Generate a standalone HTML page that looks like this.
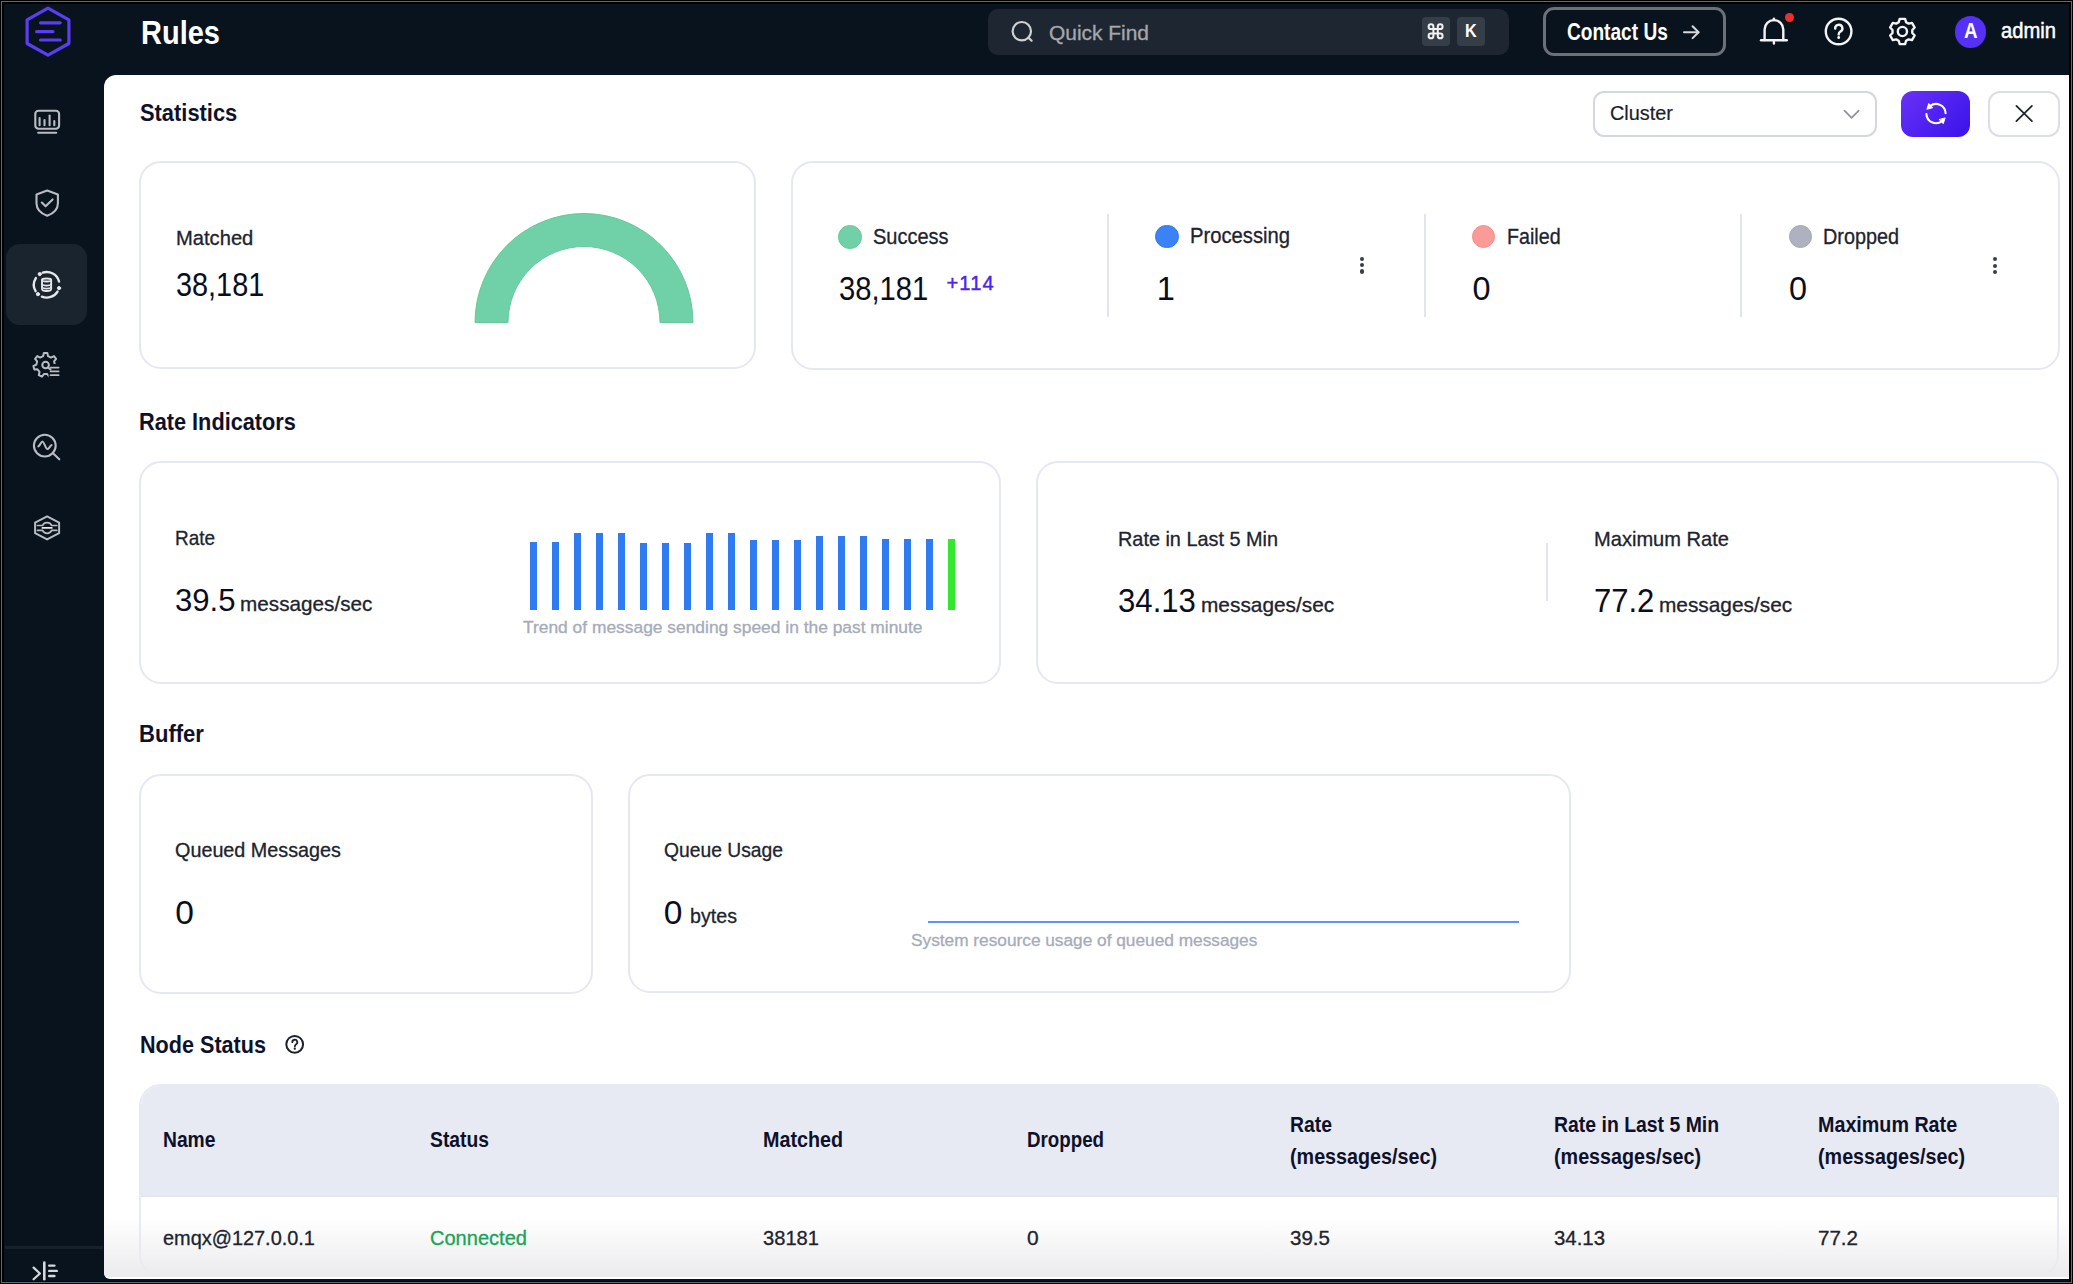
<!DOCTYPE html>
<html><head><meta charset="utf-8"><style>
*{margin:0;padding:0;box-sizing:border-box}
html,body{width:2073px;height:1284px;overflow:hidden;background:#000;font-family:"Liberation Sans",sans-serif}
.bg{position:absolute;left:4px;top:4px;width:2065px;height:1276.5px;background:#09131d}
.t{position:absolute;white-space:nowrap;line-height:1;transform-origin:0 0}
.abs{position:absolute}
.frame{position:absolute;left:1px;top:1px;width:2071px;height:1282px;border:1.3px solid #55707a;pointer-events:none}
.main{position:absolute;left:104px;top:75px;width:1964.5px;height:1204.2px;background:#fff;border-radius:12px 0 0 6px;overflow:hidden}
.fade{position:absolute;left:0;right:0;bottom:2.5px;height:60px;background:linear-gradient(to bottom,rgba(236,236,238,0),rgba(235,235,237,1))}
.card{position:absolute;border:2px solid #e6e8f1;border-radius:22px;background:#fff}
.bar{position:absolute;width:7.4px}
.div{position:absolute;width:2px;background:#e3e5ee}
.dot{position:absolute;border-radius:50%}
</style></head><body>
<div class="bg"></div>
<div class="main">
</div>
<div class="card" style="left:139px;top:161px;width:617px;height:208px"></div>
<div class="card" style="left:791px;top:161px;width:1269px;height:209px"></div>
<div class="card" style="left:139px;top:461px;width:862px;height:223px"></div>
<div class="card" style="left:1036px;top:461px;width:1023px;height:223px"></div>
<div class="card" style="left:139px;top:774px;width:454px;height:220px"></div>
<div class="card" style="left:628px;top:774px;width:943px;height:219px"></div>
<div class="abs" style="left:139px;top:1084px;width:1920px;height:193px;border:2px solid #e8eaf2;border-radius:22px;overflow:hidden;background:#fff">
  <div class="abs" style="left:0;top:0;width:100%;height:110.5px;background:#e8eaf3;border-bottom:1px solid #e1e3ec"></div>
</div>
<!-- sidebar selected -->
<div class="abs" style="left:6px;top:243.5px;width:81px;height:81.5px;background:#1a242e;border-radius:14px"></div>
<div class="abs" style="left:5px;top:1246.3px;width:98px;height:2.4px;background:#18212a"></div>
<!-- logo -->
<svg class="abs" style="left:0;top:0" width="104" height="75" viewBox="0 0 104 75">
  <polygon points="48,8.2 68.9,19.9 68.9,43.5 48,55.2 27.1,43.5 27.1,19.9" fill="none" stroke="#5a3df5" stroke-width="3.2" stroke-linejoin="round"/>
  <g stroke="#5a3df5" stroke-width="3.2" stroke-linecap="round">
    <line x1="40.5" y1="22.8" x2="60.2" y2="22.8"/>
    <line x1="36.6" y1="31.7" x2="52.9" y2="31.7"/>
    <line x1="40.5" y1="40" x2="60.2" y2="40"/>
  </g>
</svg>
<!-- sidebar icons -->
<svg class="abs" style="left:0;top:90px" width="104" height="470" viewBox="0 90 104 470" fill="none" stroke="#b9bcc2" stroke-width="2.1" stroke-linecap="round" stroke-linejoin="round">
  <rect x="35.3" y="110.7" width="23.8" height="18" rx="3.2"/>
  <line x1="38.2" y1="132.8" x2="56.2" y2="132.8"/>
  <line x1="39.6" y1="118" x2="39.6" y2="125.3"/>
  <line x1="44.5" y1="120" x2="44.5" y2="125.3"/>
  <line x1="49.6" y1="115.5" x2="49.6" y2="125.3"/>
  <line x1="54.3" y1="121" x2="54.3" y2="125.3"/>
  <path d="M47.2 190.6 L57.9 194.6 V203.2 C57.9 209.3 53 213.6 47.2 215.8 C41.4 213.6 36.5 209.3 36.5 203.2 V194.6 Z"/>
  <polyline points="41.8,202.6 45.6,206.3 52.6,199.4"/>
  <!-- db sync -->
  <g stroke="#e6e7ea" stroke-width="2.4">
  <path d="M42.74 272.63 A12.8 12.8 0 0 1 59.06 281.49"/>
  <path d="M57.56 291.58 A12.8 12.8 0 0 1 41.91 296.67"/>
  <path d="M35.61 291.20 A12.8 12.8 0 0 1 35.84 278.02"/>
  <circle cx="39.73" cy="274.07" r="1.6" fill="#e6e7ea" stroke-width="1"/>
  <circle cx="59.06" cy="288.11" r="1.6" fill="#e6e7ea" stroke-width="1"/>
  <circle cx="37.97" cy="294.16" r="1.6" fill="#e6e7ea" stroke-width="1"/>
  <ellipse cx="46.6" cy="280" rx="4.6" ry="1.5" stroke-width="1.8"/>
  <path d="M42 280 V289 C42 290.2 44 291 46.6 291 C49.2 291 51.2 290.2 51.2 289 V280" stroke-width="1.8"/>
  <path d="M42 283.6 C42 284.8 44 285.6 46.6 285.6 C49.2 285.6 51.2 284.8 51.2 283.6" stroke-width="1.6"/>
  <path d="M42 286.6 C42 287.8 44 288.6 46.6 288.6 C49.2 288.6 51.2 287.8 51.2 286.6" stroke-width="1.6"/>
  </g>
  <!-- gear list -->
  <path d="M43.15 356.13 L43.85 352.93 L47.35 352.93 L48.05 356.13 L51.01 357.56 L53.95 356.11 L56.13 358.84 L54.06 361.38 L54.79 364.59 L57.76 365.98 L56.98 369.39 L53.70 369.36 L51.65 371.93 L52.41 375.12 L49.27 376.64 L47.24 374.05 L43.96 374.05 L41.93 376.64 L38.79 375.12 L39.55 371.93 L37.50 369.36 L34.22 369.39 L33.44 365.98 L36.41 364.59 L37.14 361.38 L35.07 358.84 L37.25 356.11 L40.19 357.56 Z" stroke-width="2"/>
  <rect x="48.5" y="364" width="12" height="16" fill="#0a121c" stroke="none"/>
  <circle cx="45.6" cy="365" r="3.3" stroke-width="2"/>
  <line x1="48" y1="367.4" x2="50.5" y2="369.6" stroke-width="2"/>
  <line x1="50.6" y1="367.6" x2="58.6" y2="367.6" stroke-width="1.8"/>
  <line x1="50.6" y1="371.4" x2="58.6" y2="371.4" stroke-width="1.8"/>
  <line x1="50.6" y1="375.2" x2="58.6" y2="375.2" stroke-width="1.8"/>
  <!-- magnifier pulse -->
  <circle cx="44.8" cy="445.6" r="10.9"/>
  <line x1="52.7" y1="453.1" x2="59.3" y2="459.3"/>
  <path d="M38.3 446.4 C40 445.6 41.2 441.2 42.7 441.6 C44.2 442 45.8 449.4 47.6 449.1 C49 448.8 50 446 51.5 445.1" stroke-width="2"/>
  <!-- layers -->
  <path d="M47.1 516.4 L59.1 522.6 V533.2 L47.1 539.4 L35.1 533.2 V522.6 Z" stroke-width="2"/>
  <path d="M37.4 525.5 H42.6 C44.2 521.6 50 521.6 51.6 525.5 H56.8" stroke-width="1.7"/>
  <path d="M42.4 527.9 H51.8" stroke="#e8e9ec" stroke-width="1.8"/>
  <path d="M37.4 530.4 H42.6 C44.2 534.3 50 534.3 51.6 530.4 H56.8" stroke-width="1.7"/>
</svg>
<!-- collapse icon -->
<svg class="abs" style="left:20px;top:1255px" width="50" height="29" viewBox="20 1255 50 29" fill="none" stroke="#d6d8dc" stroke-width="2.2" stroke-linecap="round" stroke-linejoin="round">
  <polyline points="33.6,1267.6 39.9,1273.5 33.6,1279.3"/>
  <line x1="44.3" y1="1262.6" x2="44.3" y2="1279.3" stroke-width="2.6"/>
  <line x1="49.2" y1="1265.6" x2="54.4" y2="1265.6" stroke-width="2.4"/>
  <line x1="49.2" y1="1270.9" x2="56.8" y2="1270.9" stroke-width="2.4"/>
  <line x1="49.2" y1="1276" x2="54.4" y2="1276" stroke-width="2.4"/>
</svg>
<!-- search box -->
<div class="abs" style="left:987.5px;top:8.7px;width:521px;height:46.5px;background:#1e2731;border-radius:10px"></div>
<div class="abs" style="left:1421.5px;top:17.4px;width:28.2px;height:28.6px;background:#353e47;border-radius:4px"></div>
<div class="abs" style="left:1456.7px;top:17.4px;width:28px;height:28.6px;background:#353e47;border-radius:4px"></div>
<svg class="abs" style="left:1000px;top:10px" width="40" height="40" viewBox="1000 10 40 40" fill="none" stroke="#cfd1d4" stroke-width="2.2" stroke-linecap="round">
  <circle cx="1021.8" cy="31.2" r="9.2"/>
  <line x1="1028.4" y1="37.6" x2="1031.6" y2="40.7"/>
</svg>
<svg class="abs" style="left:1425px;top:21px" width="22" height="20" viewBox="1425 21 22 20" fill="none" stroke="#f2f2f3" stroke-width="1.9">
  <path d="M1433.4 29.1 H1437.8 V33.5 H1433.4 Z M1433.4 29.1 V26.7 A2.4 2.4 0 1 0 1431 29.1 H1433.4 M1437.8 29.1 V26.7 A2.4 2.4 0 1 1 1440.2 29.1 H1437.8 M1433.4 33.5 V35.9 A2.4 2.4 0 1 1 1431 33.5 H1433.4 M1437.8 33.5 V35.9 A2.4 2.4 0 1 0 1440.2 33.5 H1437.8" stroke-width="2"/>
</svg>
<!-- contact us -->
<div class="abs" style="left:1542.7px;top:7.3px;width:183.3px;height:48.6px;border:3px solid #6b7079;border-radius:11px"></div>
<svg class="abs" style="left:1680px;top:22px" width="24" height="20" viewBox="1680 22 24 20" fill="none" stroke="#d8d9dc" stroke-width="2" stroke-linecap="round" stroke-linejoin="round">
  <line x1="1684" y1="32.2" x2="1698.4" y2="32.2"/>
  <polyline points="1692.6,26.3 1698.6,32.2 1692.6,38.1"/>
</svg>
<!-- bell / help / gear -->
<svg class="abs" style="left:1750px;top:5px" width="170" height="50" viewBox="1750 5 170 50" fill="none" stroke="#f4f4f5" stroke-width="2.4" stroke-linecap="round" stroke-linejoin="round">
  <path d="M1764.6 40 V29.5 A9.3 9.3 0 0 1 1783.3 29.5 V40"/>
  <line x1="1761" y1="40.3" x2="1786.8" y2="40.3"/>
  <line x1="1773.9" y1="18.6" x2="1773.9" y2="20"/>
  <line x1="1773.9" y1="42" x2="1773.9" y2="43.6"/>
  <circle cx="1838.6" cy="31.5" r="12.8"/>
  <path d="M1835.2 28.6 A3.6 3.6 0 1 1 1840.4 31.6 C1839.2 32.4 1838.7 33 1838.7 34.4" stroke-width="2.4"/>
  <line x1="1838.7" y1="37.4" x2="1838.7" y2="37.7" stroke-width="2.8"/>
  <circle cx="1902.4" cy="31.5" r="4.6"/>
  <path d="M1898.72 22.20 L1899.72 18.88 L1905.08 18.88 L1906.08 22.20 L1908.61 23.66 L1911.99 22.87 L1914.67 27.51 L1912.29 30.04 L1912.29 32.96 L1914.67 35.49 L1911.99 40.13 L1908.61 39.34 L1906.08 40.80 L1905.08 44.12 L1899.72 44.12 L1898.72 40.80 L1896.19 39.34 L1892.81 40.13 L1890.13 35.49 L1892.51 32.96 L1892.51 30.04 L1890.13 27.51 L1892.81 22.87 L1896.19 23.66 Z"/>
</svg>
<div class="dot" style="left:1784.7px;top:12.8px;width:9.6px;height:9.6px;background:#e8312e"></div>
<div class="dot" style="left:1954.6px;top:16.2px;width:31.4px;height:31.4px;background:#5531f6"></div>

<!-- select + buttons -->
<div class="abs" style="left:1593px;top:90.8px;width:284.3px;height:46.3px;border:2px solid #d5d7df;border-radius:11px;background:#fff"></div>
<svg class="abs" style="left:1840px;top:104px" width="24" height="20" viewBox="1840 104 24 20" fill="none" stroke="#8e9199" stroke-width="1.7" stroke-linecap="round" stroke-linejoin="round">
  <polyline points="1844.5,110.6 1851.6,117.8 1858.7,110.6"/>
</svg>
<div class="abs" style="left:1901px;top:90.7px;width:69.3px;height:46.4px;border-radius:12px;background:linear-gradient(135deg,#6c30f6 0%,#4a1ff0 60%,#3b12e8 100%)"></div>
<svg class="abs" style="left:1920px;top:98px" width="32" height="32" viewBox="1920 98 32 32" fill="none" stroke="#ffffff" stroke-width="2.1" stroke-linecap="round" stroke-linejoin="round">
  <path d="M1930.09 106.04 A9.6 9.6 0 0 1 1945.59 113.26"/>
  <path d="M1941.91 121.16 A9.6 9.6 0 0 1 1926.41 113.94"/>
  <path d="M1927.00 108.95 L1928.75 103.50 L1932.50 107.39 Z" fill="#fff" stroke="#fff" stroke-width="1"/>
  <path d="M1945.00 118.25 L1943.25 123.70 L1939.50 119.81 Z" fill="#fff" stroke="#fff" stroke-width="1"/>
</svg>
<div class="abs" style="left:1987.5px;top:90.7px;width:72px;height:46.8px;border:2px solid #dcdee5;border-radius:12px;background:#fff"></div>
<svg class="abs" style="left:2010px;top:100px" width="28" height="28" viewBox="2010 100 28 28" fill="none" stroke="#22252c" stroke-width="1.8" stroke-linecap="round">
  <line x1="2016.4" y1="105.9" x2="2031.9" y2="121.1"/>
  <line x1="2031.9" y1="105.9" x2="2016.4" y2="121.1"/>
</svg>
<!-- kebabs -->
<div class="dot" style="left:1360px;top:256.7px;width:4.2px;height:4.2px;background:#3a3d48"></div>
<div class="dot" style="left:1360px;top:263.1px;width:4.2px;height:4.2px;background:#3a3d48"></div>
<div class="dot" style="left:1360px;top:269.4px;width:4.2px;height:4.2px;background:#3a3d48"></div>
<div class="dot" style="left:1993.3px;top:257.2px;width:4.2px;height:4.2px;background:#3a3d48"></div>
<div class="dot" style="left:1993.3px;top:263.6px;width:4.2px;height:4.2px;background:#3a3d48"></div>
<div class="dot" style="left:1993.3px;top:269.9px;width:4.2px;height:4.2px;background:#3a3d48"></div>
<!-- node status help -->
<svg class="abs" style="left:282px;top:1032px" width="26" height="26" viewBox="282 1032 26 26" fill="none" stroke="#1d2030" stroke-width="2" stroke-linecap="round">
  <circle cx="294.7" cy="1044.3" r="8.4"/>
  <path d="M292.3 1042.2 A2.5 2.5 0 1 1 296 1044.4 C295.2 1045 294.8 1045.4 294.8 1046.4" stroke-width="1.8"/>
  <line x1="294.8" y1="1048.6" x2="294.8" y2="1048.8" stroke-width="2.2"/>
</svg>

<div class="main" style="background:transparent;pointer-events:none"><div class="fade"></div></div>
<!-- gauge -->
<svg class="abs" style="left:460px;top:200px" width="250" height="130" viewBox="460 200 250 130">
  <path d="M475 322.5 A109 109 0 0 1 693 322.5 L660 322.5 A76 76 0 0 0 508 322.5 Z" fill="#70d0a7" stroke="#66c99c" stroke-width="1"/>
</svg>
<div class="div" style="left:1107px;top:214px;height:103px"></div>
<div class="div" style="left:1424px;top:214px;height:103px"></div>
<div class="div" style="left:1740px;top:214px;height:103px"></div>
<div class="div" style="left:1546px;top:543px;height:58px"></div>
<div class="dot" style="left:838.2px;top:225px;width:23.5px;height:23.5px;background:#72d0a8;border:1px solid #66c99c"></div>
<div class="dot" style="left:1155px;top:224.5px;width:23.8px;height:23.8px;background:#3b82f6;border:1px solid #2f77ef"></div>
<div class="dot" style="left:1471.5px;top:224.5px;width:23.8px;height:23.8px;background:#fb9a96;border:1px solid #f4908b"></div>
<div class="dot" style="left:1788.5px;top:224.5px;width:23.8px;height:23.8px;background:#adb1c0;border:1px solid #a3a7b6"></div>
<div class="bar" style="left:530px;top:542px;height:67.6px;background:#2f7cf2"></div>
<div class="bar" style="left:552px;top:542px;height:67.6px;background:#2f7cf2"></div>
<div class="bar" style="left:574px;top:533px;height:76.6px;background:#2f7cf2"></div>
<div class="bar" style="left:596px;top:533px;height:76.6px;background:#2f7cf2"></div>
<div class="bar" style="left:618px;top:533px;height:76.6px;background:#2f7cf2"></div>
<div class="bar" style="left:640px;top:543px;height:66.6px;background:#2f7cf2"></div>
<div class="bar" style="left:662px;top:543px;height:66.6px;background:#2f7cf2"></div>
<div class="bar" style="left:684px;top:543px;height:66.6px;background:#2f7cf2"></div>
<div class="bar" style="left:706px;top:533px;height:76.6px;background:#2f7cf2"></div>
<div class="bar" style="left:728px;top:533px;height:76.6px;background:#2f7cf2"></div>
<div class="bar" style="left:750px;top:540px;height:69.6px;background:#2f7cf2"></div>
<div class="bar" style="left:772px;top:540px;height:69.6px;background:#2f7cf2"></div>
<div class="bar" style="left:794px;top:540px;height:69.6px;background:#2f7cf2"></div>
<div class="bar" style="left:816px;top:535.5px;height:74.1px;background:#2f7cf2"></div>
<div class="bar" style="left:838px;top:535.5px;height:74.1px;background:#2f7cf2"></div>
<div class="bar" style="left:860px;top:535.5px;height:74.1px;background:#2f7cf2"></div>
<div class="bar" style="left:882px;top:539px;height:70.6px;background:#2f7cf2"></div>
<div class="bar" style="left:904px;top:539px;height:70.6px;background:#2f7cf2"></div>
<div class="bar" style="left:926px;top:539px;height:70.6px;background:#2f7cf2"></div>
<div class="bar" style="left:948px;top:539px;height:70.6px;background:#33e62e"></div>
<div class="abs" style="left:927.6px;top:920.6px;width:591.4px;height:2px;background:#5a96f5"></div>
<div class="t" style="left:141.00px;top:17.00px;font-size:32.68px;font-weight:bold;color:#ffffff;letter-spacing:0px;transform:scaleX(0.8871);">Rules</div>
<div class="t" style="left:1049.00px;top:23.00px;font-size:20.25px;font-weight:normal;color:#a4a7ae;letter-spacing:0px;transform:scaleX(1.0331);-webkit-text-stroke:0.3px #a4a7ae;">Quick Find</div>
<div class="t" style="left:1566.60px;top:21.00px;font-size:23.46px;font-weight:bold;color:#ffffff;letter-spacing:0px;transform:scaleX(0.8142);">Contact Us</div>
<div class="t" style="left:2000.90px;top:21.00px;font-size:21.51px;font-weight:normal;color:#ffffff;letter-spacing:0px;transform:scaleX(0.9377);-webkit-text-stroke:0.5px #ffffff;">admin</div>
<div class="t" style="left:1963.50px;top:20.00px;font-size:21.93px;font-weight:bold;color:#ffffff;letter-spacing:0px;transform:scaleX(0.8580);">A</div>
<div class="t" style="left:1464.70px;top:22.00px;font-size:18.72px;font-weight:bold;color:#ffffff;letter-spacing:0px;transform:scaleX(0.8667);">K</div>
<div class="t" style="left:139.80px;top:101.00px;font-size:24.08px;font-weight:bold;color:#0e1129;letter-spacing:0px;transform:scaleX(0.9081);">Statistics</div>
<div class="t" style="left:1610.30px;top:103.00px;font-size:20.25px;font-weight:normal;color:#1c1e2a;letter-spacing:0px;transform:scaleX(0.9821);-webkit-text-stroke:0.2px #1c1e2a;">Cluster</div>
<div class="t" style="left:176.00px;top:229.00px;font-size:19.83px;font-weight:normal;color:#20232d;letter-spacing:0px;transform:scaleX(1.0164);-webkit-text-stroke:0.3px #20232d;">Matched</div>
<div class="t" style="left:176.30px;top:269.00px;font-size:32.40px;font-weight:normal;color:#0b0d1c;letter-spacing:0px;transform:scaleX(0.8910);">38,181</div>
<div class="t" style="left:873.40px;top:227.00px;font-size:21.51px;font-weight:normal;color:#20232d;letter-spacing:0px;transform:scaleX(0.9305);-webkit-text-stroke:0.3px #20232d;">Success</div>
<div class="t" style="left:839.10px;top:272.00px;font-size:33.38px;font-weight:normal;color:#0b0d1c;letter-spacing:0px;transform:scaleX(0.8752);">38,181</div>
<div class="t" style="left:946.40px;top:273.00px;font-size:20.11px;font-weight:normal;color:#4b25ef;letter-spacing:1.15px;-webkit-text-stroke:0.45px #4b25ef;">+114</div>
<div class="t" style="left:1190.40px;top:226.00px;font-size:21.51px;font-weight:normal;color:#20232d;letter-spacing:0px;transform:scaleX(0.9412);-webkit-text-stroke:0.3px #20232d;">Processing</div>
<div class="t" style="left:1156.80px;top:273.00px;font-size:32.54px;font-weight:normal;color:#0b0d1c;letter-spacing:0px;">1</div>
<div class="t" style="left:1506.80px;top:227.00px;font-size:21.51px;font-weight:normal;color:#20232d;letter-spacing:0px;transform:scaleX(0.9155);-webkit-text-stroke:0.3px #20232d;">Failed</div>
<div class="t" style="left:1472.50px;top:273.00px;font-size:32.40px;font-weight:normal;color:#0b0d1c;letter-spacing:0px;">0</div>
<div class="t" style="left:1823.30px;top:227.00px;font-size:21.51px;font-weight:normal;color:#20232d;letter-spacing:0px;transform:scaleX(0.9218);-webkit-text-stroke:0.3px #20232d;">Dropped</div>
<div class="t" style="left:1789.00px;top:273.00px;font-size:32.40px;font-weight:normal;color:#0b0d1c;letter-spacing:0px;">0</div>
<div class="t" style="left:139.30px;top:410.00px;font-size:23.88px;font-weight:bold;color:#0e1129;letter-spacing:0px;transform:scaleX(0.9094);">Rate Indicators</div>
<div class="t" style="left:175.40px;top:528.00px;font-size:20.25px;font-weight:normal;color:#20232d;letter-spacing:0px;transform:scaleX(0.9357);-webkit-text-stroke:0.3px #20232d;">Rate</div>
<div class="t" style="left:175.40px;top:585.00px;font-size:31.42px;font-weight:normal;color:#0b0d1c;letter-spacing:0px;transform:scaleX(0.9902);">39.5</div>
<div class="t" style="left:240.40px;top:594.00px;font-size:20.25px;font-weight:normal;color:#20232d;letter-spacing:0px;transform:scaleX(1.0228);-webkit-text-stroke:0.3px #20232d;">messages/sec</div>
<div class="t" style="left:523.00px;top:620.00px;font-size:16.76px;font-weight:normal;color:#a5abb9;letter-spacing:0px;transform:scaleX(1.0381);-webkit-text-stroke:0.3px #a5abb9;">Trend of message sending speed in the past minute</div>
<div class="t" style="left:1118.00px;top:529.00px;font-size:20.25px;font-weight:normal;color:#20232d;letter-spacing:0px;transform:scaleX(0.9804);-webkit-text-stroke:0.3px #20232d;">Rate in Last 5 Min</div>
<div class="t" style="left:1118.40px;top:584.00px;font-size:33.38px;font-weight:normal;color:#0b0d1c;letter-spacing:0px;transform:scaleX(0.9330);">34.13</div>
<div class="t" style="left:1201.00px;top:595.00px;font-size:20.25px;font-weight:normal;color:#20232d;letter-spacing:0px;transform:scaleX(1.0297);-webkit-text-stroke:0.3px #20232d;">messages/sec</div>
<div class="t" style="left:1594.40px;top:529.00px;font-size:20.25px;font-weight:normal;color:#20232d;letter-spacing:0px;transform:scaleX(0.9916);-webkit-text-stroke:0.3px #20232d;">Maximum Rate</div>
<div class="t" style="left:1594.40px;top:584.00px;font-size:33.38px;font-weight:normal;color:#0b0d1c;letter-spacing:0px;transform:scaleX(0.9292);">77.2</div>
<div class="t" style="left:1658.80px;top:595.00px;font-size:20.25px;font-weight:normal;color:#20232d;letter-spacing:0px;transform:scaleX(1.0290);-webkit-text-stroke:0.3px #20232d;">messages/sec</div>
<div class="t" style="left:139.20px;top:722.00px;font-size:23.88px;font-weight:bold;color:#0e1129;letter-spacing:0px;transform:scaleX(0.9240);">Buffer</div>
<div class="t" style="left:175.30px;top:840.00px;font-size:20.25px;font-weight:normal;color:#20232d;letter-spacing:0px;transform:scaleX(0.9765);-webkit-text-stroke:0.3px #20232d;">Queued Messages</div>
<div class="t" style="left:175.30px;top:896.00px;font-size:33.52px;font-weight:normal;color:#0b0d1c;letter-spacing:0px;">0</div>
<div class="t" style="left:663.80px;top:840.00px;font-size:20.25px;font-weight:normal;color:#20232d;letter-spacing:0px;transform:scaleX(0.9524);-webkit-text-stroke:0.3px #20232d;">Queue Usage</div>
<div class="t" style="left:663.80px;top:896.00px;font-size:33.52px;font-weight:normal;color:#0b0d1c;letter-spacing:0px;">0</div>
<div class="t" style="left:690.20px;top:906.00px;font-size:20.25px;font-weight:normal;color:#20232d;letter-spacing:0px;transform:scaleX(0.9711);-webkit-text-stroke:0.3px #20232d;">bytes</div>
<div class="t" style="left:911.30px;top:933.00px;font-size:16.76px;font-weight:normal;color:#a5abb9;letter-spacing:0px;transform:scaleX(1.0303);-webkit-text-stroke:0.3px #a5abb9;">System resource usage of queued messages</div>
<div class="t" style="left:140.30px;top:1033.00px;font-size:24.30px;font-weight:bold;color:#0e1129;letter-spacing:0px;transform:scaleX(0.8889);">Node Status</div>
<div class="t" style="left:162.80px;top:1129.00px;font-size:22.07px;font-weight:bold;color:#0e1129;letter-spacing:0px;transform:scaleX(0.8726);">Name</div>
<div class="t" style="left:429.50px;top:1129.00px;font-size:22.07px;font-weight:bold;color:#0e1129;letter-spacing:0px;transform:scaleX(0.8754);">Status</div>
<div class="t" style="left:763.10px;top:1129.00px;font-size:22.07px;font-weight:bold;color:#0e1129;letter-spacing:0px;transform:scaleX(0.8944);">Matched</div>
<div class="t" style="left:1027.00px;top:1129.00px;font-size:22.07px;font-weight:bold;color:#0e1129;letter-spacing:0px;transform:scaleX(0.8494);">Dropped</div>
<div class="t" style="left:1290.00px;top:1114.00px;font-size:22.07px;font-weight:bold;color:#0e1129;letter-spacing:0px;transform:scaleX(0.8787);">Rate</div>
<div class="t" style="left:1290.00px;top:1146.00px;font-size:22.07px;font-weight:bold;color:#0e1129;letter-spacing:0px;transform:scaleX(0.8950);">(messages/sec)</div>
<div class="t" style="left:1554.20px;top:1114.00px;font-size:22.07px;font-weight:bold;color:#0e1129;letter-spacing:0px;transform:scaleX(0.8802);">Rate in Last 5 Min</div>
<div class="t" style="left:1554.20px;top:1146.00px;font-size:22.07px;font-weight:bold;color:#0e1129;letter-spacing:0px;transform:scaleX(0.8950);">(messages/sec)</div>
<div class="t" style="left:1818.00px;top:1114.00px;font-size:22.07px;font-weight:bold;color:#0e1129;letter-spacing:0px;transform:scaleX(0.8933);">Maximum Rate</div>
<div class="t" style="left:1818.00px;top:1146.00px;font-size:22.07px;font-weight:bold;color:#0e1129;letter-spacing:0px;transform:scaleX(0.8950);">(messages/sec)</div>
<div class="t" style="left:162.80px;top:1228.00px;font-size:20.95px;font-weight:normal;color:#20232d;letter-spacing:0px;transform:scaleX(0.9509);-webkit-text-stroke:0.3px #20232d;">emqx@127.0.0.1</div>
<div class="t" style="left:429.50px;top:1228.00px;font-size:20.95px;font-weight:normal;color:#17a553;letter-spacing:0px;transform:scaleX(0.9571);-webkit-text-stroke:0.3px #17a553;">Connected</div>
<div class="t" style="left:763.00px;top:1228.00px;font-size:20.95px;font-weight:normal;color:#20232d;letter-spacing:0px;transform:scaleX(0.9614);-webkit-text-stroke:0.3px #20232d;">38181</div>
<div class="t" style="left:1027.00px;top:1228.00px;font-size:20.95px;font-weight:normal;color:#20232d;letter-spacing:0px;-webkit-text-stroke:0.3px #20232d;">0</div>
<div class="t" style="left:1290.00px;top:1228.00px;font-size:20.95px;font-weight:normal;color:#20232d;letter-spacing:0px;transform:scaleX(0.9804);-webkit-text-stroke:0.3px #20232d;">39.5</div>
<div class="t" style="left:1554.20px;top:1228.00px;font-size:20.95px;font-weight:normal;color:#20232d;letter-spacing:0px;transform:scaleX(0.9724);-webkit-text-stroke:0.3px #20232d;">34.13</div>
<div class="t" style="left:1818.00px;top:1228.00px;font-size:20.95px;font-weight:normal;color:#20232d;letter-spacing:0px;transform:scaleX(0.9804);-webkit-text-stroke:0.3px #20232d;">77.2</div>
<div class="frame"></div>
</body></html>
